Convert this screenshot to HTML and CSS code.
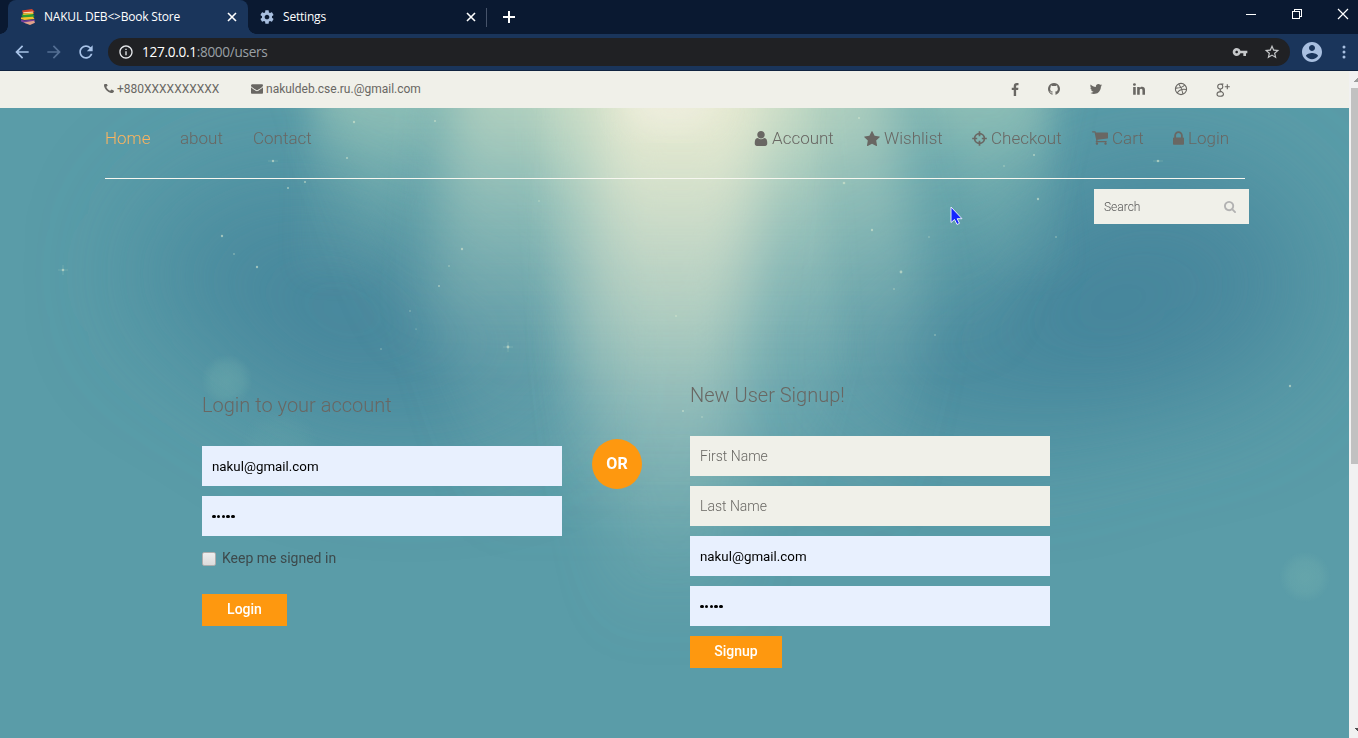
FILE: index.html
```html
<!DOCTYPE html>
<html lang="en">
<head>
<meta charset="utf-8">
<title>NAKUL DEB&lt;&gt;Book Store</title>
<link rel="stylesheet" href="styles.css">
</head>
<body>
<div class="window">
  <div class="tabs">
    <div class="tab active">
      <svg class="favicon" viewBox="0 0 16 16"><path d="M2 1.500L12 0l2.500 2.500L13 4 3 4.500z" fill="#d8452b"/><path d="M3 3.200l10-.7v1.300L4 4.300z" fill="#f4d8b0"/><path d="M2.500 5l10-.5L14.500 7l-1 1.500L4 9 1.500 7z" fill="#2c9b35"/><path d="M2.500 4.500l11-.7v1.300l-10 .8z" fill="#f2c02c"/><path d="M1 8.500l12-.7 1.500 2.200-10 1-3.500-1z" fill="#f4c229"/><path d="M1 10.500l3.500 1 10-1 .5 2-9 2-5-2z" fill="#75409a"/><path d="M3.500 13.500L14 11.800l1 2L10 16z" fill="#e2a28a"/></svg>
      <span class="tab-title">NAKUL DEB&lt;&gt;Book Store</span>
      <svg class="x" viewBox="0 0 10 10"><path d="M1 1l8 8M9 1L1 9"/></svg>
    </div>
    <div class="tab">
      <svg class="gear" viewBox="0 0 24 24"><path d="M19.43 12.98c.04-.32.07-.64.07-.98s-.03-.66-.07-.98l2.11-1.65c.19-.15.24-.42.12-.64l-2-3.46c-.12-.22-.39-.3-.61-.22l-2.49 1c-.52-.4-1.08-.73-1.69-.98l-.38-2.65C14.46 2.18 14.25 2 14 2h-4c-.25 0-.46.18-.49.42l-.38 2.65c-.61.25-1.17.59-1.69.98l-2.49-1c-.23-.09-.49 0-.61.22l-2 3.46c-.13.22-.07.49.12.64l2.11 1.65c-.04.32-.07.65-.07.98s.03.66.07.98l-2.11 1.65c-.19.15-.24.42-.12.64l2 3.46c.12.22.39.3.61.22l2.49-1c.52.4 1.08.73 1.69.98l.38 2.65c.03.24.24.42.49.42h4c.25 0 .46-.18.49-.42l.38-2.65c.61-.25 1.17-.59 1.69-.98l2.49 1c.23.09.49 0 .61-.22l2-3.46c.12-.22.07-.49-.12-.64l-2.11-1.65zM12 15.5c-1.93 0-3.5-1.57-3.5-3.5s1.570-3.500 3.500-3.500 3.500 1.570 3.500 3.500-1.570 3.500-3.500 3.500z"/></svg>
      <span class="tab-title">Settings</span>
      <svg class="x" viewBox="0 0 10 10"><path d="M1 1l8 8M9 1L1 9"/></svg>
    </div>
    <svg class="plus" viewBox="0 0 12 12"><path d="M6 0v12M0 6h12"/></svg>
    <div class="controls">
      <svg viewBox="0 0 12 12"><path d="M1 6.500h10"/></svg>
      <svg viewBox="0 0 12 12"><path d="M1.500 3.500h7v7h-7zM3.500 3.500v-2h7v7h-2"/></svg>
      <svg viewBox="0 0 12 12"><path class="diag" d="M1 1l10 10M11 1L1 11"/></svg>
    </div>
  </div>
  <div class="toolbar">
    <svg class="arrow" viewBox="0 0 24 24"><path d="M20 11H7.830l5.590-5.590L12 4l-8 8 8 8 1.410-1.410L7.830 13H20v-2z"/></svg>
    <svg class="arrow off" viewBox="0 0 24 24"><path d="M12 4l-1.410 1.410L16.170 11H4v2h12.170l-5.580 5.590L12 20l8-8z"/></svg>
    <svg class="arrow" viewBox="0 0 24 24"><path d="M17.650 6.350C16.200 4.900 14.210 4 12 4c-4.420 0-7.990 3.580-7.990 8s3.570 8 7.990 8c3.730 0 6.840-2.550 7.730-6h-2.080c-.82 2.330-3.040 4-5.650 4-3.310 0-6-2.690-6-6s2.690-6 6-6c1.660 0 3.140.69 4.220 1.780L13 11h7V4l-2.350 2.350z"/></svg>
    <div class="omnibox">
      <svg class="info" viewBox="0 0 24 24"><path d="M11 17h2v-6h-2v6zm1-15C6.480 2 2 6.480 2 12s4.480 10 10 10 10-4.480 10-10S17.520 2 12 2zm0 18c-4.410 0-8-3.590-8-8s3.590-8 8-8 8 3.590 8 8-3.590 8-8 8zM11 9h2V7h-2v2z"/></svg>
      <span class="url">127.0.0.1<span>:8000/users</span></span>
      <svg class="key" viewBox="0 0 24 24"><path d="M12.650 10C11.830 7.670 9.610 6 7 6c-3.310 0-6 2.690-6 6s2.690 6 6 6c2.610 0 4.830-1.670 5.650-4H17v4h4v-4h2v-4H12.650zM7 14c-1.100 0-2-.9-2-2s.9-2 2-2 2 .9 2 2-.9 2-2 2z"/></svg>
      <svg class="bookmark" viewBox="1 1 22 22"><path d="M22 9.240l-7.190-.62L12 2 9.190 8.630 2 9.240l5.460 4.730L5.820 21 12 17.270 18.180 21l-1.630-7.030L22 9.240zM12 15.400l-3.760 2.270 1-4.280-3.320-2.880 4.380-.38L12 6.100l1.710 4.040 4.380.38-3.320 2.880 1 4.280L12 15.400z"/></svg>
    </div>
    <svg class="avatar" viewBox="0 0 24 24"><path d="M12 2C6.480 2 2 6.480 2 12s4.480 10 10 10 10-4.480 10-10S17.520 2 12 2zm0 3c1.660 0 3 1.340 3 3s-1.340 3-3 3-3-1.340-3-3 1.340-3 3-3zm0 14.200c-2.500 0-4.710-1.280-6-3.220.03-1.990 4-3.080 6-3.080 1.990 0 5.970 1.090 6 3.080-1.290 1.940-3.500 3.220-6 3.220z"/></svg>
    <svg class="dots" viewBox="0 0 4 14"><circle cx="2" cy="2" r="1.500"/><circle cx="2" cy="7" r="1.500"/><circle cx="2" cy="12" r="1.500"/></svg>
  </div>

  <div class="viewport">
    <div class="page">
      <div class="contact-bar">
        <span class="contact phone"><svg viewBox="192 256 1408 1408"><path d="M1600 1240q0 27-10 70.500t-21 68.500q-21 50-122 106-94 51-186 51-27 0-53-3.500t-57.500-12.500-47-14.500-55.500-20.500-49-18q-98-35-175-83-127-79-264-216t-216-264q-48-77-83-175-3-9-18-49t-20.500-55.500-14.500-47-12.500-57.500-3.500-53q0-92 51-186 56-101 106-122 25-11 68.500-21t70.500-10q14 0 21 3 18 6 53 76 11 19 30 54t35 63.500 31 53.500q3 4 17.500 25t21.500 35.500 7 28.500q0 20-28.500 50t-62 55-62 53-28.500 46q0 9 5 22.500t8.500 20.500 14 24 11.500 19q76 137 174 235t235 174q2 1 19 11.500t24 14 20.500 8.500 22.500 5q18 0 46-28.500t53-62 55-62 50-28.500q14 0 28.500 7t35.500 21.500 25 17.500q25 15 53.500 31t63.500 35 54 30q70 35 76 53 3 7 3 21z"/></svg>+880XXXXXXXXXX</span>
        <span class="contact mail"><svg viewBox="0 256 1792 1408"><path d="M1792 710v794q0 66-47 113t-113 47h-1472q-66 0-113-47t-47-113v-794q44 49 101 87 362 246 497 345 57 42 92.500 65.500t94.500 48 110 24.500h2q51 0 110-24.500t94.500-48 92.500-65.500q170-123 498-345 57-39 100-87zm0-294q0 79-49 151t-122 123q-376 261-468 325-10 7-42.500 31t-54 38.500-52 32.500-57.500 27-50 9h-2q-23 0-50-9t-57.500-27-52-32.500-54-38.500-42.500-31q-91-64-262-182.500t-205-142.500q-62-42-117-115.500t-55-136.500q0-78 41.500-130t118.500-52h1472q65 0 112.500 47t47.500 113z"/></svg>nakuldeb.cse.ru.@gmail.com</span>
        <div class="social">
          <svg class="fb" viewBox="448 0 896 1664"><path d="M1343 12v264h-157q-86 0-116 36t-30 108v189h293l-39 296h-254v759h-306v-759h-255v-296h255v-218q0-186 104-288.500t277-102.500q147 0 228 12z"/></svg>
          <svg viewBox="0 0 1792 1792"><path d="M896 128q209 0 385.500 103t279.500 279.500 103 385.500q0 251-146.500 451.500t-378.500 277.500q-27 5-40-7t-13-30q0-3 .5-76.500t.5-134.500q0-97-52-142 57-6 102.500-18t94-39 81-66.500 53-105 20.500-150.500q0-119-79-206 37-91-8-204-28-9-81 11t-92 44l-38 24q-93-26-192-26t-192 26q-16-11-42.500-27t-83.500-38.500-85-13.500q-45 113-8 204-79 87-79 206 0 85 20.500 150t52.500 105 80.500 67 94 39 102.500 18q-39 36-49 103-21 10-45 15t-57 5-65.500-21.500-55.500-62.500q-19-32-48.500-52t-49.500-24l-20-3q-21 0-29 4.500t-5 11.500 9 14 13 12l7 5q22 10 43.500 38t31.500 51l10 23q13 38 44 61.500t67 30 69.500 7 55.500-3.500l23-4q0 38 .5 88.500t.5 54.500q0 18-13 30t-40 7q-232-77-378.500-277.500t-146.500-451.500q0-209 103-385.500t279.500-279.500 385.500-103z"/></svg>
          <svg viewBox="0 0 1792 1792"><path d="M1684 408q-67 98-162 167 1 14 1 42 0 130-38 259.500t-115.500 248.500-184.500 210.500-258 146-323 54.500q-271 0-496-145 35 4 78 4 225 0 401-138-105-2-188-64.500t-114-159.500q33 5 61 5 43 0 85-11-112-23-185.500-111.500t-73.500-205.500v-4q68 38 146 41-66-44-105-115t-39-154q0-88 44-163 121 149 294.500 238.500t371.500 99.500q-8-38-8-74 0-134 94.500-228.500t228.500-94.500q140 0 236 102 109-21 205-78-37 115-142 178 93-10 186-50z"/></svg>
          <svg viewBox="0 0 1792 1792"><path d="M477 625v991h-330v-991h330zm21-306q1 73-50.500 122t-135.500 49h-2q-82 0-132-49t-50-122q0-74 51.500-122.500t134.500-48.500 133 48.500 51 122.500zm1166 729v568h-329v-530q0-105-40.500-164.500t-126.500-59.500q-63 0-105.500 34.500t-63.500 85.500q-11 30-11 81v553h-329q2-399 2-647t-1-296l-1-48h329v144h-2q20-32 41-56t56.500-52 87-43.500 114.500-15.500q171 0 275 113.500t104 332.500z"/></svg>
          <svg class="line" viewBox="0 0 14 14"><circle cx="7" cy="7" r="5.600"/><path d="M4.700 2C7 4.800 8.400 8 9 12M1.500 6.100C5 6.200 8.500 5.500 10.700 3M3.200 11C5 7.800 8.500 6.700 12.500 7.500"/></svg>
          <svg class="line gplus" viewBox="0 0 14 14"><path d="M7.500 1H4.800C2.900 1 1.700 2.100 1.700 3.600S2.800 6 4.300 6s2.500-1 2.500-2.500S5.700 1.200 4.900 1M4.700 6c-1 .9-.8 1.500.2 2.200 1.300.8 2.600 1.400 2.600 2.800 0 1.300-1.300 2.300-3.300 2.300S1 12.500 1 11.200 2.300 8.700 5.200 8.600M11.300 1.200v5M8.800 3.700h5"/></svg>
        </div>
      </div>

      <div class="scene">
        <svg class="backdrop" viewBox="0 0 1349 630" preserveAspectRatio="none">
          <defs>
            <filter id="soft" x="-60%" y="-70%" width="220%" height="240%"><feGaussianBlur stdDeviation="55"/></filter>
            <filter id="ray" x="-50%" y="-20%" width="200%" height="140%"><feGaussianBlur stdDeviation="15"/></filter>
            <filter id="wide" x="-50%" y="-20%" width="200%" height="140%"><feGaussianBlur stdDeviation="25"/></filter>
            <linearGradient id="beam" gradientUnits="userSpaceOnUse" x1="0" y1="0" x2="0" y2="530"><stop offset="0" stop-color="#f2efd6" stop-opacity=".72"/><stop offset=".2" stop-color="#ebebd1" stop-opacity=".55"/><stop offset=".4" stop-color="#dde5cd" stop-opacity=".44"/><stop offset=".65" stop-color="#c5d9ca" stop-opacity=".25"/><stop offset="1" stop-color="#a0c8c0" stop-opacity="0"/></linearGradient>
            <linearGradient id="middle" gradientUnits="userSpaceOnUse" x1="0" y1="0" x2="0" y2="430"><stop offset="0" stop-color="#dfe9cb" stop-opacity=".5"/><stop offset=".35" stop-color="#c4dcc8" stop-opacity=".28"/><stop offset=".7" stop-color="#a5ccc5" stop-opacity=".13"/><stop offset="1" stop-color="#a8cfc0" stop-opacity="0"/></linearGradient>
            <linearGradient id="side" gradientUnits="userSpaceOnUse" x1="0" y1="0" x2="0" y2="260"><stop offset="0" stop-color="#b5d8c1" stop-opacity=".6"/><stop offset=".3" stop-color="#98c8ba" stop-opacity=".33"/><stop offset="1" stop-color="#8cc0b8" stop-opacity="0"/></linearGradient>
            <radialGradient id="bokeh"><stop offset="0" stop-color="#78b4b0" stop-opacity=".38"/><stop offset=".6" stop-color="#78b4b0" stop-opacity=".26"/><stop offset="1" stop-color="#78b4b0" stop-opacity="0"/></radialGradient>
          </defs>
          <rect width="1349" height="630" fill="#5a9ca8"/>
          <g filter="url(#soft)" fill="#43839a">
            <ellipse cx="290" cy="165" rx="150" ry="100" opacity=".65"/>
            <ellipse cx="410" cy="240" rx="165" ry="90" opacity=".65"/>
            <ellipse cx="1160" cy="175" rx="150" ry="120" opacity=".8"/>
            <ellipse cx="1000" cy="240" rx="170" ry="95" opacity=".65"/>
          </g>
          <path filter="url(#wide)" fill="url(#side)" d="M300 -80H1060L1000 260H400z" opacity=".75"/>
          <path filter="url(#ray)" fill="url(#side)" d="M315 -50H440L370 170H300zM920 -50H1040L1070 170H1000z" opacity=".4"/>
          <path filter="url(#wide)" fill="url(#middle)" d="M460 -80H875L925 200 890 430H490L430 200z"/>
          <path filter="url(#ray)" fill="url(#middle)" d="M540 -50H810L840 240 800 430H560z" opacity=".75"/>
          <path filter="url(#wide)" fill="url(#beam)" d="M600 -80H775L750 240 745 530H610L580 240z"/>
          <path filter="url(#ray)" fill="url(#beam)" d="M630 -50H735L710 240 705 470H640z" opacity=".3"/>
          <ellipse filter="url(#ray)" cx="670" cy="-5" rx="45" ry="28" fill="#f2f0e4" opacity=".6"/>
          <circle cx="227" cy="272" r="26" fill="url(#bokeh)"/>
          <circle cx="280" cy="340" r="40" fill="url(#bokeh)" opacity=".4"/>
          <circle cx="1305" cy="469" r="26" fill="url(#bokeh)"/>
          <g fill="#d7e8cf" opacity=".6">
            <circle cx="354" cy="14" r="1.200"/><circle cx="435" cy="13" r="1"/><circle cx="273" cy="53" r="1.200"/><circle cx="347" cy="50" r="1"/><circle cx="305" cy="74" r="1"/><circle cx="288" cy="80" r="1"/><circle cx="222" cy="128" r="1.200"/><circle cx="257" cy="159" r="1.200"/><circle cx="234" cy="146" r=".8"/><circle cx="462" cy="141" r="1.200"/><circle cx="449" cy="158" r=".8"/><circle cx="439" cy="178" r=".9"/><circle cx="508" cy="239" r="1.400"/><circle cx="63" cy="162" r="1.300"/><circle cx="844" cy="75" r="1.300"/><circle cx="872" cy="122" r="1.200"/><circle cx="901" cy="164" r="1.400"/><circle cx="894" cy="181" r=".8"/><circle cx="929" cy="129" r=".7"/><circle cx="1038" cy="91" r="1.200"/><circle cx="1056" cy="129" r=".8"/><circle cx="1158" cy="53" r="1.300"/><circle cx="1034" cy="47" r="1"/><circle cx="1004" cy="58" r=".8"/><circle cx="1290" cy="278" r="1.200"/><circle cx="859" cy="10" r="1"/><circle cx="539" cy="93" r=".8"/><circle cx="410" cy="203" r=".7"/><circle cx="416" cy="221" r=".6"/><circle cx="381" cy="241" r=".7"/><circle cx="676" cy="208" r=".9"/><circle cx="683" cy="303" r="1"/><circle cx="702" cy="309" r=".8"/><circle cx="935" cy="227" r=".8"/>
          </g>
          <path d="M503 239h10M508 234v10M58 162h10M63 157v10M268 53h10M1153 53h10" stroke="#cae2cf" stroke-width=".7" opacity=".3"/>
        </svg>
        <nav class="nav">
          <a class="home" href="#">Home</a><a class="about" href="#">about</a><a class="contact-link" href="#">Contact</a>
          <div class="user-nav">
            <a class="n-account" href="#"><svg viewBox="256 128 1280 1536"><path d="M1536 1399q0 109-62.500 187t-150.500 78h-854q-88 0-150.500-78t-62.500-187q0-85 8.500-160.500t31.500-152 58.500-131 94-89 134.500-34.500q131 128 313 128t313-128q76 0 134.500 34.500t94 89 58.500 131 31.500 152 8.500 160.500zm-256-887q0 159-112.500 271.500t-271.500 112.500-271.500-112.500-112.500-271.500 112.500-271.500 271.500-112.500 271.500 112.500 112.500 271.500z"/></svg>Account</a>
            <a class="n-wish" href="#"><svg viewBox="64 32 1664 1587"><path d="M1728 647q0 22-26 48l-363 354 86 500q1 7 1 20 0 21-10.500 35.500t-30.500 14.500q-19 0-40-12l-449-236-449 236q-22 12-40 12-21 0-31.500-14.500t-10.500-35.500q0-6 2-20l86-500-364-354q-25-27-25-48 0-37 56-46l502-73 225-455q19-41 49-41t49 41l225 455 502 73q56 9 56 46z"/></svg>Wishlist</a>
            <a class="n-check" href="#"><svg class="cross" viewBox="0 0 15 15"><circle cx="7.500" cy="7.500" r="4.900"/><path d="M7.500 .2v5M7.500 9.800v5M.2 7.500h5M9.800 7.500h5"/></svg>Checkout</a>
            <a class="n-cart" href="#"><svg viewBox="64 256 1664 1408"><path d="M704 1536q0 52-38 90t-90 38-90-38-38-90 38-90 90-38 90 38 38 90zm896 0q0 52-38 90t-90 38-90-38-38-90 38-90 90-38 90 38 38 90zm128-1088v512q0 24-16.500 42.500t-40.500 21.500l-1044 122q13 60 13 70 0 16-24 64h920q26 0 45 19t19 45-19 45-45 19h-1024q-26 0-45-19t-19-45q0-11 8-31.500t16-36 21.500-40 15.500-29.500l-177-823h-204q-26 0-45-19t-19-45 19-45 45-19h256q16 0 28.500 6.500t19.500 15.500 13 24.500 8 26 5.500 29.500 4.500 26h1201q26 0 45 19t19 45z"/></svg>Cart</a>
            <a class="n-login" href="#"><svg viewBox="320 128 1152 1408"><path d="M640 768h512v-192q0-106-75-181t-181-75-181 75-75 181v192zm832 96v576q0 40-28 68t-68 28h-960q-40 0-68-28t-28-68v-576q0-40 28-68t68-28h32v-192q0-184 132-316t316-132 316 132 132 316v192h32q40 0 68 28t28 68z"/></svg>Login</a>
          </div>
        </nav>
        <div class="search"><span>Search</span><svg viewBox="64 128 1664 1664"><path d="M1216 832q0-185-131.500-316.500t-316.500-131.500-316.500 131.500-131.500 316.500 131.500 316.500 316.500 131.500 316.500-131.500 131.500-316.500zm512 832q0 52-38 90t-90 38q-54 0-90-38l-343-342q-179 124-399 124-143 0-273.500-55.500t-225-150-150-225-55.500-273.500 55.500-273.500 150-225 225-150 273.500-55.500 273.500 55.500 225 150 150 225 55.500 273.500q0 220-124 399l343 343q37 37 37 90z"/></svg></div>
        <main class="forms">
          <section class="login">
            <h2>Login to your account</h2>
            <div class="field filled">nakul@gmail.com</div>
            <div class="field filled dotsfield"><i></i><i></i><i></i><i></i><i></i></div>
            <label class="keep"><span class="box"></span>Keep me signed in</label>
            <button class="btn">Login</button>
          </section>
          <div class="or">OR</div>
          <section class="signup">
            <h2>New User Signup!</h2>
            <div class="field">First Name</div>
            <div class="field">Last Name</div>
            <div class="field filled">nakul@gmail.com</div>
            <div class="field filled dotsfield"><i></i><i></i><i></i><i></i><i></i></div>
            <button class="btn wide">Signup</button>
          </section>
        </main>
      </div>
    </div>
    <div class="scrollbar"><div class="up"></div><div class="thumb"></div><div class="down"></div></div>
  </div>
  <svg class="cursor" viewBox="0 0 13 19"><path d="M1 1v15.500l3.500-3 2.500 5 2.500-1.200-2.300-4.600h4.800z" fill="#1424ff" stroke="#e6ecf8" stroke-width="1"/></svg>
</div>
</body>
</html>
```
FILE: styles.css
```css
* { box-sizing: border-box; }
body { margin: 0; font-family: Roboto, sans-serif; overflow: hidden; }
svg { display: block; flex: none; }
a { color: inherit; text-decoration: none; }
.window { position: relative; width: 1358px; height: 738px; display: flex; flex-direction: column; overflow: hidden; }

.tabs { height: 34px; background: #0a1931; display: flex; align-items: center; padding-left: 8px; }
.tab { height: 34px; width: 239px; display: flex; align-items: center; padding: 0 11px 0 12px; color: #fff; font: 12px "Open Sans", sans-serif; letter-spacing: -.2px; position: relative; }
.tab.active { width: 240px; background: #1a355b; border-radius: 8px 8px 0 0; }
.tab.active::before, .tab.active::after { content: ""; position: absolute; bottom: 0; width: 8px; height: 8px; }
.tab.active::before { left: -8px; background: radial-gradient(circle at 0 0, transparent 7.5px, #1a355b 8px); }
.tab.active::after { right: -8px; background: radial-gradient(circle at 100% 0, transparent 7.5px, #1a355b 8px); }
.tab:not(.active)::after { content: ""; position: absolute; right: 0; top: 8px; height: 19px; width: 1px; background: #46536a; }
.favicon { width: 16px; height: 16px; margin-right: 8px; }
.gear { width: 16px; height: 16px; margin: 0 8px 0 -1px; fill: #a8bfe0; }
.tab-title { flex: 1; white-space: nowrap; padding-bottom: 1px; }
.x { width: 10px; height: 10px; stroke: #fff; stroke-width: 1.6; fill: none; }
.plus { width: 12px; height: 12px; margin-left: 16px; stroke: #fff; stroke-width: 2; }
.controls { margin-left: auto; display: flex; gap: 34px; padding-right: 9px; margin-top: -6px; }
.controls svg { width: 12px; height: 12px; fill: none; stroke: #fff; stroke-width: 1; shape-rendering: crispEdges; }
.controls .diag { shape-rendering: auto; stroke-width: 1.2; }

.toolbar { height: 37px; background: #1a355b; border-bottom: 1px solid #10233f; display: flex; align-items: center; padding: 0 11px 0 12px; }
.arrow { width: 20px; height: 20px; fill: #a8c3e8; margin-right: 12px; }
.arrow.off { fill: #546f94; }
.omnibox { width: 1182px; height: 28px; background: #202124; border-radius: 14px; display: flex; align-items: center; padding: 0 10px; }
.info { width: 16px; height: 16px; fill: #e8eaed; margin-right: 8px; }
.url { color: #fff; font: 13.6px "Open Sans", sans-serif; letter-spacing: -.3px; flex: 1; padding-bottom: 1px; }
.url span { color: #9aa0a6; }
.key { width: 16px; height: 16px; fill: #c6c8ca; margin-right: 16px; }
.bookmark { width: 16px; height: 16px; fill: #c6c8ca; }
.avatar { width: 24px; height: 24px; fill: #a8bfe0; margin-left: 10px; }
.dots { width: 4px; height: 14px; fill: #a8bfe0; margin-left: 18px; }

.viewport { flex: 1; display: flex; min-height: 0; }
.page { width: 1349px; display: flex; flex-direction: column; color: #696763; }
.contact-bar { height: 37px; background: #f0f0e9; display: flex; align-items: center; padding: 0 0 1px 104px; font-size: 12px; }
.contact { display: flex; align-items: center; white-space: nowrap; }
.contact svg { fill: #696763; }
.phone { width: 147px; }
.phone svg { width: 10px; height: 10px; margin-right: 3px; }
.mail svg { width: 12px; height: 10px; margin-right: 3px; }
.social { margin-left: auto; display: flex; gap: 28.200px; padding-right: 119px; align-items: center; }
.social svg { width: 14px; height: 14px; fill: #696763; }
.social .fb { width: 8px; height: 13px; }
.social .line { fill: none; stroke: #696763; stroke-width: 1.100; }
.social .gplus { margin-top: 1px; }

.scene { flex: 1; position: relative; isolation: isolate; background: #5a9da8; }
.backdrop { position: absolute; inset: 0; width: 100%; height: 100%; z-index: -1; }
.nav { height: 71px; margin: 0 104px 0 105px; border-bottom: 1px solid #f7f7f0; display: flex; align-items: flex-start; padding-top: 20px; font-size: 17px; font-weight: 300; line-height: 20px; }
.nav a { white-space: nowrap; }
.home { width: 75px; color: #fdb45e; }
.about { width: 73px; }
.user-nav { margin-left: auto; display: flex; }
.user-nav a { display: flex; align-items: center; }
.user-nav svg { fill: #696763; margin-right: 4px; }
.n-account { width: 110px; } .n-account svg { width: 14px; height: 15px; }
.n-wish { width: 108px; } .n-wish svg { width: 16px; height: 15px; }
.n-check { width: 120px; } .n-check svg { width: 15px; height: 15px; }
.user-nav .cross { fill: none; stroke: #696763; stroke-width: 1.7; }
.n-cart { width: 81px; } .n-cart svg { width: 16px; height: 14px; }
.n-login { width: 72px; } .n-login svg { width: 11px; height: 14px; }
.search { width: 155px; height: 35px; margin: 10px 0 0 1094px; background: #f0f0e9; display: flex; align-items: center; justify-content: space-between; padding: 0 13px 0 10px; font-size: 12px; font-weight: 300; color: #555; }
.search svg { width: 12px; height: 12px; fill: #b2b2b2; }

.forms { display: flex; align-items: flex-start; padding: 156px 0 0 202px; }
.login, .signup { width: 360px; display: flex; flex-direction: column; align-items: flex-start; gap: 10px; }
.login { padding-top: 10px; }
.forms h2 { margin: 0 0 20px; font-size: 20px; line-height: 24px; font-weight: 300; height: 26px; padding-top: 3px; }
.field { width: 360px; height: 40px; background: #f0f0e9; padding: 0 10px; font-size: 14px; font-weight: 300; line-height: 40px; color: #696763; }
.field.filled { background: #e8f0fe; color: #000; font-size: 13.333px; font-weight: 400; padding-top: 1px; }
.dotsfield { display: flex; align-items: center; gap: 1.200px; }
.dotsfield i { width: 3.600px; height: 3.600px; border-radius: 50%; background: #000; }
.keep { display: flex; align-items: center; height: 24px; font-size: 14px; color: #3d4a4c; }
.box { width: 14px; height: 14px; margin-right: 6px; background: linear-gradient(#eee, #dcdcdc); border: 1px solid #adadad; border-radius: 2px; position: relative; top: 1px; }
.btn { width: 85px; height: 32px; margin-top: 14px; border: 0; padding: 0 0 2px; background: #fe980f; color: #fff; font: 500 14px Roboto, sans-serif; }
.btn.wide { width: 92px; margin-top: 0; }
.or { width: 50px; height: 50px; margin: 59px 48px 0 30px; border-radius: 50%; background: #fe980f; color: #fff; font-size: 16px; font-weight: 700; line-height: 50px; text-align: center; }

.scrollbar { width: 9px; background: #f1f1f1; padding-left: 2px; display: flex; flex-direction: column; }
.up { height: 17px; background: linear-gradient(135deg, transparent 50%, #9b9b9b 50%) 3px 7px / 4px 4px no-repeat; }
.thumb { height: 376px; background: #c1c1c1; }
.down { margin-top: auto; height: 17px; background: linear-gradient(45deg, transparent 50%, #505050 50%) 3px 7px / 4px 4px no-repeat; }
.cursor { position: absolute; left: 950px; top: 206px; width: 13px; height: 19px; }
```
